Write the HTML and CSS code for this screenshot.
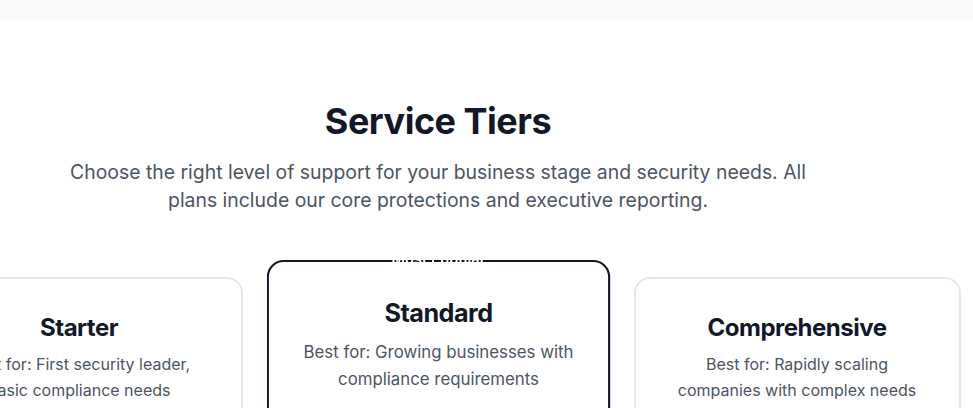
FILE: index.html
```html
<!DOCTYPE html>
<html lang="en">
<head>
<meta charset="utf-8">
<title>Service Tiers</title>
<link rel="stylesheet" href="styles.css">
</head>
<body>
<div class="band"></div>
<section class="tiers">
  <div class="inner">
    <h2 class="title">Service Tiers</h2>
    <p class="lead">Choose the right level of support for your business stage and security needs. All plans include our core protections and executive reporting.</p>
    <div class="cards">
      <div class="card">
        <h3 class="card-title">Starter</h3>
        <p class="card-desc">Best for: First security leader, basic compliance needs</p>
      </div>
      <div class="card card-featured">
        <span class="badge">Most Popular</span>
        <h3 class="card-title">Standard</h3>
        <p class="card-desc">Best for: Growing businesses with compliance requirements</p>
      </div>
      <div class="card">
        <h3 class="card-title">Comprehensive</h3>
        <p class="card-desc">Best for: Rapidly scaling companies with complex needs</p>
      </div>
    </div>
  </div>
</section>
</body>
</html>
```

FILE: styles.css
```css
* { box-sizing: border-box; }
html, body { margin: 0; padding: 0; background: #ffffff; overflow: hidden; }
body { font-family: Inter, "Noto Sans", sans-serif; color: #111827; }

.band { height: 20px; background: #f9fafb; }

.tiers { padding-top: 81px; }
.inner { width: 876px; display: flex; flex-direction: column; align-items: center; }

.title {
  margin: 0 0 17px;
  font-size: 36px;
  line-height: 40px;
  font-weight: 700;
  color: #111827;
  letter-spacing: -0.5px;
}
.lead {
  margin: 0;
  max-width: 768px;
  text-align: center;
  font-size: 19.4px;
  line-height: 28px;
  color: #4b5563;
}

.cards {
  margin-top: 63px;
  width: 876px;
  display: flex;
  justify-content: center;
  gap: 32px;
}
.card {
  flex: 0 0 327px;
  height: 680px;
  border: 2px solid #e5e7eb;
  border-radius: 16px;
  padding: 33px 32px;
  text-align: center;
  background: #ffffff;
  position: relative;
}
.card-featured {
  border-color: #111827;
  transform: scale(1.05);
}
.badge {
  position: absolute;
  top: -17px;
  left: 50%;
  transform: translateX(-50%);
  padding: 4px 16px;
  font-size: 14px;
  line-height: 20px;
  font-weight: 600;
  color: #ffffff;
  white-space: nowrap;
}
.card-title {
  margin: 0 0 7px;
  font-size: 24px;
  line-height: 32px;
  font-weight: 700;
  color: #111827;
  letter-spacing: -0.5px;
}
.card-desc {
  margin: 0;
  font-size: 16px;
  line-height: 26px;
  color: #4b5563;
}
```
